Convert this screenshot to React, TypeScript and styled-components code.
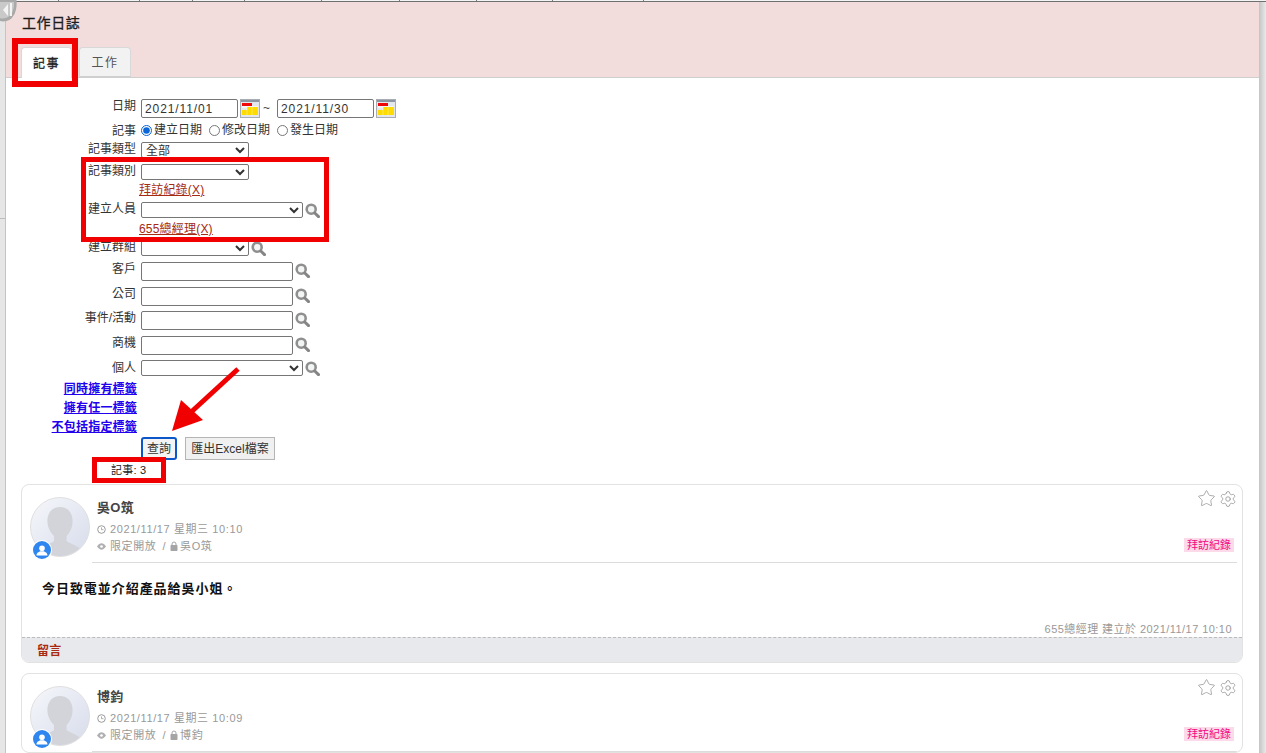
import React from 'react';
import styled, { createGlobalStyle } from 'styled-components';
import { Settings, Star } from 'lucide-react';

const GlobalStyle = createGlobalStyle`
  html, body {
    margin: 0;
    padding: 0;
    background: #fff;
  }
  body {
    font-family: "Liberation Sans", "Noto Sans CJK TC", sans-serif;
    font-size: 12px;
    color: #333;
  }
`;

const Page = styled.div`
  position: relative;
  width: 1266px;
  height: 753px;
  overflow: hidden;
  display: flex;
  flex-direction: column;
`;

const TopStrip = styled.div`
  flex: none;
  height: 2px;
  display: flex;
  background: #f4f4f4;
  border-bottom: 1px solid #707070;
  box-sizing: border-box;
`;

const TopCell = styled.div<{ $w: number }>`
  width: ${p => p.$w}px;
  flex: none;
  box-sizing: border-box;
  border-right: 1px solid #777;
`;

const Body = styled.div`
  flex: 1;
  min-height: 0;
  display: flex;
`;

const LeftRail = styled.div`
  flex: none;
  width: 6px;
  box-sizing: border-box;
  background: linear-gradient(#e6e6e6 216px, #bdbdbd 216px, #bdbdbd 217px, #e6e6e6 217px);
  border-right: 1px solid #c4c4c4;
`;

const RightRail = styled.div`
  flex: none;
  width: 7px;
  background: linear-gradient(to right, #c4c4c4, #e9e9e9);
`;

const Main = styled.div`
  flex: 1;
  min-width: 0;
  display: flex;
  flex-direction: column;
`;

const Header = styled.div`
  flex: none;
  height: 76px;
  box-sizing: border-box;
  border-bottom: 1px solid #cfcfcf;
  background: #f2dddc;
  padding: 12px 0 0 16px;
  display: flex;
  flex-direction: column;
`;

const Title = styled.div`
  font-size: 14px;
  line-height: 18px;
  color: #1c1c1c;
  letter-spacing: 0.6px;
  -webkit-text-stroke: 0.3px #1c1c1c;
`;

const Tabs = styled.div`
  margin: 15px 0 0 -1px;
  display: flex;
  gap: 7px;
`;

const Tab = styled.div<{ $active?: boolean }>`
  width: ${p => (p.$active ? 51 : 52)}px;
  height: ${p => (p.$active ? 31 : 30)}px;
  box-sizing: border-box;
  padding-bottom: 2px;
  border: 1px solid #d8d8d8;
  border-bottom: ${p => (p.$active ? 'none' : '1px solid #cfcfcf')};
  border-radius: 4px 4px 0 0;
  background: ${p => (p.$active ? '#fff' : '#f2f2f2')};
  color: ${p => (p.$active ? '#222' : '#555')};
  font-size: 12px;
  letter-spacing: 1.5px;
  ${p => (p.$active ? '-webkit-text-stroke: 0.3px #222;' : '')}
  display: flex;
  align-items: center;
  justify-content: center;
`;

const Form = styled.div`
  flex: none;
  padding-top: 20px;
  display: flex;
  flex-direction: column;
`;

const Row = styled.div<{ $h: number }>`
  height: ${p => p.$h}px;
  display: flex;
  gap: 5px;
  align-items: flex-start;
`;

const Label = styled.div<{ $drop?: number }>`
  width: 130px;
  flex: none;
  padding-top: ${p => p.$drop ?? 0}px;
  text-align: right;
  font-size: 12px;
  line-height: 14px;
  color: #333;
  white-space: nowrap;
`;

const Field = styled.div`
  display: flex;
  align-items: flex-start;
  min-width: 0;
`;

const DateInput = styled.input`
  width: 97px;
  height: 19px;
  margin: 1px 0 0;
  padding: 0 3px;
  box-sizing: border-box;
  border: 1px solid #767676;
  border-radius: 2px;
  font: 12px "Liberation Sans", sans-serif;
  letter-spacing: 0.9px;
  color: #333;
`;

const Tilde = styled.span`
  margin: 3px 7px 0 3px;
  color: #444;
  line-height: 14px;
`;

const Cal = styled.svg`
  display: block;
  margin: 1px 0 0 2px;
`;

const RadioLabel = styled.label`
  display: flex;
  align-items: center;
  height: 14px;
  margin-right: 7px;
  color: #333;
  line-height: 14px;
`;

const Radio = styled.input`
  width: 11px;
  height: 11px;
  margin: 0 2px 0 0;
  accent-color: #0b66d8;
`;

const Select = styled.select<{ $w: number }>`
  width: ${p => p.$w}px;
  height: 16px;
  margin: 0;
  padding: 0;
  box-sizing: border-box;
  border: 1px solid #767676;
  border-radius: 2px;
  background: #fff;
  font: 12px "Liberation Sans", "Noto Sans CJK TC", sans-serif;
  color: #333;
`;

const TextBox = styled.input`
  width: 152px;
  height: 19px;
  margin: 0;
  box-sizing: border-box;
  border: 1px solid #767676;
  border-radius: 2px;
`;

const Lens = styled.svg`
  display: block;
  margin: 1px 0 0 2px;
`;

const PickedTag = styled.a<{ $top: number }>`
  margin: ${p => p.$top}px 0 0 -2px;
  line-height: 18px;
  color: #a52a12;
  text-decoration: underline;
  letter-spacing: 0.2px;
`;

const TagLink = styled.a`
  width: 131px;
  flex: none;
  margin-top: 1px;
  text-align: right;
  font-weight: 700;
  line-height: 18px;
  color: #2200ee;
  text-decoration: underline;
  white-space: nowrap;
  letter-spacing: 0.2px;
`;

const Buttons = styled.div`
  margin: 1px 0 0 135px;
  display: flex;
  gap: 8px;
`;

const QueryButton = styled.button`
  width: 36px;
  height: 23px;
  padding: 0 0 2px;
  box-sizing: border-box;
  border: 2px solid #0b57c9;
  border-radius: 3px;
  background: #f4f4f4;
  font: 12px "Liberation Sans", "Noto Sans CJK TC", sans-serif;
  color: #333;
`;

const ExportButton = styled.button`
  width: 90px;
  height: 23px;
  padding: 0 0 2px;
  box-sizing: border-box;
  border: 1px solid #b4b4b4;
  background: #f0f0f0;
  font: 12px "Liberation Sans", "Noto Sans CJK TC", sans-serif;
  color: #333;
`;

const Count = styled.div`
  height: 24px;
  padding-left: 105px;
  font-size: 11px;
  line-height: 21px;
  color: #222;
  letter-spacing: 0.25px;
`;

const Cards = styled.div`
  padding: 0 16px 0 15px;
  display: flex;
  flex-direction: column;
  gap: 10px;
`;

const Card = styled.article`
  position: relative;
  flex: none;
  box-sizing: border-box;
  border: 1px solid #e2e2e2;
  border-radius: 8px;
  overflow: hidden;
  background: #fff;
`;

const CardTools = styled.div`
  position: absolute;
  top: 4px;
  right: 5px;
  display: flex;
  align-items: center;
  gap: 3px;
  color: #979797;
`;

const CardHead = styled.div`
  height: 78px;
  padding-left: 8px;
  padding-right: 5px;
  display: flex;
  box-sizing: border-box;
`;

const AvatarWrap = styled.div`
  position: relative;
  flex: none;
  width: 60px;
  height: 60px;
  margin-top: 12px;
`;

const AvatarBadge = styled.div`
  position: absolute;
  left: 3px;
  bottom: -2px;
  width: 18px;
  height: 18px;
  display: flex;
  align-items: center;
  justify-content: center;
  border-radius: 50%;
  background: #2f86ee;
  box-shadow: 0 0 0 1px #fff;
`;

const HeadMain = styled.div`
  flex: 1;
  min-width: 0;
  margin-left: 2px;
  padding-left: 5px;
  border-bottom: 1px solid #dcdcdc;
  display: flex;
  justify-content: space-between;
`;

const Who = styled.div`
  display: flex;
  flex-direction: column;
`;

const Name = styled.div`
  margin-top: 14px;
  font-size: 13px;
  font-weight: 700;
  line-height: 17px;
  color: #444;
  letter-spacing: 0.3px;
`;

const Meta = styled.div<{ $top: number }>`
  margin-top: ${p => p.$top}px;
  display: flex;
  align-items: center;
  gap: 4px;
  font-size: 11px;
  line-height: 14px;
  color: #999;
  letter-spacing: 0.6px;
  white-space: nowrap;
`;

const MetaSlash = styled.span`
  margin-left: 2px;
`;

const MetaOwner = styled.span`
  margin-left: -2px;
`;

const CategoryTag = styled.span`
  align-self: flex-end;
  margin: 0 3px 10px 0;
  padding: 0 3px;
  height: 14px;
  background: #fddaea;
  color: #f3077f;
  font-size: 11px;
  line-height: 14px;
`;

const Content = styled.div`
  height: 57px;
  padding: 17px 0 0 20px;
  box-sizing: border-box;
  font-size: 13px;
  line-height: 18px;
  font-weight: 700;
  color: #111;
  letter-spacing: 0.95px;
`;

const Credit = styled.div`
  height: 17px;
  padding-right: 10px;
  text-align: right;
  font-size: 11px;
  line-height: 18px;
  color: #999;
  letter-spacing: 0.45px;
`;

const Comment = styled.div`
  height: 25px;
  box-sizing: border-box;
  border-top: 1px dashed #bbb;
  background: #e8e9ed;
  padding-left: 15px;
  font-size: 12px;
  font-weight: 700;
  line-height: 26px;
  color: #a82a10;
  letter-spacing: 0.3px;
`;

const Knob = styled.svg`
  position: absolute;
  left: 0;
  top: 0;
`;

const Callout = styled.div<{ $x: number; $y: number; $w: number; $h: number; $b: number }>`
  position: absolute;
  left: ${p => p.$x}px;
  top: ${p => p.$y}px;
  width: ${p => p.$w}px;
  height: ${p => p.$h}px;
  box-sizing: border-box;
  border: ${p => p.$b}px solid #f00000;
  pointer-events: none;
`;

const Arrow = styled.svg`
  position: absolute;
  left: 165px;
  top: 362px;
`;

const CalendarIcon = () => (
  <Cal width="20" height="19" viewBox="0 0 20 19">
    <rect x="0.5" y="0.5" width="19" height="18" fill="#e3e7ec" stroke="#a8adb3" />
    <rect x="1" y="1" width="18" height="2" fill="#8c96a2" />
    <rect x="2" y="4" width="10" height="3" fill="#f00808" />
    <rect x="2" y="7" width="16" height="2" fill="#f4f4f4" />
    <rect x="7" y="8" width="11" height="3" fill="#ffdc00" />
    <rect x="2" y="11" width="16" height="5" fill="#ffdc00" />
    <path d="M7 8v9M12 8v9" stroke="#f6f6f6" strokeWidth="0.4" />
  </Cal>
);

const SearchIcon = () => (
  <Lens width="15" height="15" viewBox="0 0 15 15" fill="none">
    <circle cx="6.200" cy="6.200" r="4.500" stroke="#8f8f8f" strokeWidth="2.600" fill="#f3f5f5" />
    <path d="M9.800 10 13.500 13.600" stroke="#858585" strokeWidth="3" strokeLinecap="round" />
  </Lens>
);

const ClockIcon = () => (
  <svg width="9" height="9" viewBox="0 0 9 9" fill="none">
    <circle cx="4.500" cy="4.500" r="3.800" stroke="#9a9a9a" />
    <path d="M4.500 2.400v2.300h2" stroke="#9a9a9a" strokeWidth="0.800" />
  </svg>
);

const EyeIcon = () => (
  <svg width="9" height="7" viewBox="0 0 10 7">
    <path d="M0 3.500C1.600 1.200 3.200 0 5 0s3.400 1.200 5 3.500C8.400 5.800 6.800 7 5 7S1.600 5.800 0 3.500Z" fill="#b0b0b0" />
    <circle cx="5" cy="3.500" r="1.500" fill="#fff" />
  </svg>
);

const LockIcon = () => (
  <svg width="8" height="10" viewBox="0 0 8 10" fill="none">
    <path d="M2 4.500V3a2 2 0 0 1 4 0v1.500" stroke="#a5a5a5" />
    <rect x="0.500" y="4" width="7" height="6" rx="0.800" fill="#a5a5a5" />
  </svg>
);

const Avatar = ({ id }: { id: string }) => (
  <AvatarWrap>
    <svg width="60" height="60" viewBox="0 0 60 60">
      <defs>
        <linearGradient id={id} x1="0" y1="0" x2="1" y2="1">
          <stop offset="0" stopColor="#f6f7fb" />
          <stop offset="1" stopColor="#d7dceb" />
        </linearGradient>
        <clipPath id={`${id}-c`}>
          <circle cx="30" cy="30" r="29" />
        </clipPath>
      </defs>
      <circle cx="30" cy="30" r="29.500" fill={`url(#${id})`} stroke="#dfdfdf" />
      <g clipPath={`url(#${id}-c)`} fill="#d2d4da">
        <path d="M30 10c7.500 0 12.600 5.600 12.600 14 0 7-3 12-6 15v5c3 2.500 9 4 14 8v10H10V52c5-4 11-5.500 14-8v-5c-3-3-6.600-8-6.600-15C17.400 15.600 22.500 10 30 10Z" />
      </g>
    </svg>
    <AvatarBadge>
      <svg width="12" height="11" viewBox="0 0 12 11" fill="#fff">
        <circle cx="6" cy="3.200" r="2.800" />
        <path d="M0.500 10.500c0-3 2.500-3.600 3.800-4.300h3.400c1.300.7 3.800 1.300 3.800 4.300Z" />
      </svg>
    </AvatarBadge>
  </AvatarWrap>
);

type Note = {
  id: string;
  name: string;
  time: string;
  body?: string;
  credit?: string;
};

const notes: Note[] = [
  {
    id: 'a1',
    name: '吳O筑',
    time: '2021/11/17 星期三 10:10',
    body: '今日致電並介紹產品給吳小姐。',
    credit: '655總經理 建立於 2021/11/17 10:10',
  },
  { id: 'a2', name: '博鈞', time: '2021/11/17 星期三 10:09' },
];

const topCells = [59, 81, 53, 52, 77, 78, 77, 76, 91];

const NoteCard = ({ note }: { note: Note }) => (
  <Card>
    <CardTools>
      <Star size={19} strokeWidth={1} />
      <Settings size={18} strokeWidth={1.1} />
    </CardTools>
    <CardHead>
      <Avatar id={note.id} />
      <HeadMain>
        <Who>
          <Name>{note.name}</Name>
          <Meta $top={6}>
            <ClockIcon />
            {note.time}
          </Meta>
          <Meta $top={3}>
            <EyeIcon />
            <span>限定開放</span>
            <MetaSlash>/</MetaSlash>
            <LockIcon />
            <MetaOwner>{note.name}</MetaOwner>
          </Meta>
        </Who>
        <CategoryTag>拜訪紀錄</CategoryTag>
      </HeadMain>
    </CardHead>
    {note.body && <Content>{note.body}</Content>}
    {note.credit && <Credit>{note.credit}</Credit>}
    {note.body && <Comment>留言</Comment>}
  </Card>
);

const App: React.FC = () => {
  return (
    <Page>
      <GlobalStyle />
      <TopStrip>
        {topCells.map((w, i) => (
          <TopCell key={i} $w={w} />
        ))}
      </TopStrip>
      <Body>
        <LeftRail />
        <Main>
          <Header>
            <Title>工作日誌</Title>
            <Tabs>
              <Tab $active>記事</Tab>
              <Tab>工作</Tab>
            </Tabs>
          </Header>
          <Form>
            <Row $h={25}>
              <Label $drop={1}>日期</Label>
              <Field>
                <DateInput defaultValue="2021/11/01" />
                <CalendarIcon />
                <Tilde>~</Tilde>
                <DateInput defaultValue="2021/11/30" />
                <CalendarIcon />
              </Field>
            </Row>
            <Row $h={19}>
              <Label $drop={1}>記事</Label>
              <Field>
                <RadioLabel>
                  <Radio type="radio" name="dt" defaultChecked />
                  建立日期
                </RadioLabel>
                <RadioLabel>
                  <Radio type="radio" name="dt" />
                  修改日期
                </RadioLabel>
                <RadioLabel>
                  <Radio type="radio" name="dt" />
                  發生日期
                </RadioLabel>
              </Field>
            </Row>
            <Row $h={22}>
              <Label>記事類型</Label>
              <Field>
                <Select $w={108}>
                  <option>全部</option>
                </Select>
              </Field>
            </Row>
            <Row $h={16}>
              <Label>記事類別</Label>
              <Field>
                <Select $w={108} />
              </Field>
            </Row>
            <Row $h={22}>
              <Label />
              <Field>
                <PickedTag $top={1}>拜訪紀錄(X)</PickedTag>
              </Field>
            </Row>
            <Row $h={16}>
              <Label>建立人員</Label>
              <Field>
                <Select $w={162} />
                <SearchIcon />
              </Field>
            </Row>
            <Row $h={22}>
              <Label />
              <Field>
                <PickedTag $top={2}>655總經理(X)</PickedTag>
              </Field>
            </Row>
            <Row $h={22}>
              <Label>建立群組</Label>
              <Field>
                <Select $w={108} />
                <SearchIcon />
              </Field>
            </Row>
            <Row $h={25}>
              <Label>客戶</Label>
              <Field>
                <TextBox />
                <SearchIcon />
              </Field>
            </Row>
            <Row $h={24}>
              <Label>公司</Label>
              <Field>
                <TextBox />
                <SearchIcon />
              </Field>
            </Row>
            <Row $h={25}>
              <Label>事件/活動</Label>
              <Field>
                <TextBox />
                <SearchIcon />
              </Field>
            </Row>
            <Row $h={24}>
              <Label>商機</Label>
              <Field>
                <TextBox />
                <SearchIcon />
              </Field>
            </Row>
            <Row $h={19}>
              <Label $drop={1}>個人</Label>
              <Field>
                <Select $w={162} />
                <SearchIcon />
              </Field>
            </Row>
            <Row $h={19}>
              <TagLink>同時擁有標籤</TagLink>
            </Row>
            <Row $h={19}>
              <TagLink>擁有任一標籤</TagLink>
            </Row>
            <Row $h={19}>
              <TagLink>不包括指定標籤</TagLink>
            </Row>
            <Buttons>
              <QueryButton>查詢</QueryButton>
              <ExportButton>匯出Excel檔案</ExportButton>
            </Buttons>
            <Count>記事: 3</Count>
          </Form>
          <Cards>
            {notes.map(n => (
              <NoteCard key={n.id} note={n} />
            ))}
          </Cards>
        </Main>
        <RightRail />
      </Body>
      <Knob width="18" height="22" viewBox="0 0 18 22">
        <path d="M0 0h16.500c1 9-2 19-10 21-2 .5-4.500 .5-6.500 0Z" fill="#a9a9a9" />
        <path d="M0 2h14c.5 7-2 14-8 16-2 .5-4 .5-6 .2Z" fill="#c9c9c9" />
        <path d="M8 4 3 10l5 6Z" fill="#f4f4f4" />
        <rect x="10" y="3" width="2" height="13" fill="#f4f4f4" />
      </Knob>
      <Callout $x={12} $y={38} $w={66} $h={49} $b={6} />
      <Callout $x={81} $y={157} $w={248} $h={85} $b={5} />
      <Callout $x={92} $y={457} $w={74} $h={26} $b={5} />
      <Arrow width="80" height="75" viewBox="0 0 80 75">
        <path d="M73 7 24 52" stroke="#f00000" strokeWidth="5" fill="none" />
        <path d="M7 69 16 38 38 58Z" fill="#f00000" />
      </Arrow>
    </Page>
  );
};

export default App;
